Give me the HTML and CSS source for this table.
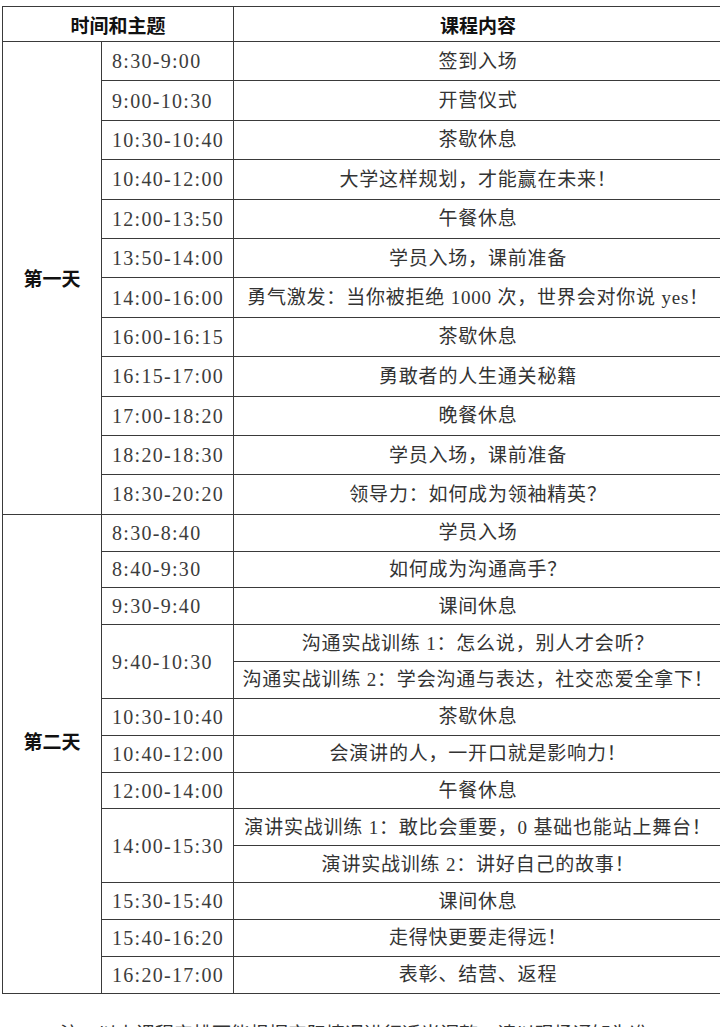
FILE: index.html
```html
<!DOCTYPE html>
<html lang="zh-CN">
<head>
<meta charset="utf-8">
<title>课程安排</title>
<link rel="stylesheet" href="styles.css">
</head>
<body>
<div class="page">
<table class="schedule">
  <colgroup>
    <col class="c-day"><col class="c-time"><col class="c-content">
  </colgroup>
  <thead>
    <tr class="head">
      <th colspan="2">时间和主题</th>
      <th>课程内容</th>
    </tr>
  </thead>
  <tbody class="day1">
    <tr><td class="day" rowspan="12">第一天</td><td class="time">8:30-9:00</td><td class="txt">签到入场</td></tr>
    <tr><td class="time">9:00-10:30</td><td class="txt">开营仪式</td></tr>
    <tr><td class="time">10:30-10:40</td><td class="txt">茶歇休息</td></tr>
    <tr><td class="time">10:40-12:00</td><td class="txt">大学这样规划，才能赢在未来！</td></tr>
    <tr><td class="time">12:00-13:50</td><td class="txt">午餐休息</td></tr>
    <tr><td class="time">13:50-14:00</td><td class="txt">学员入场，课前准备</td></tr>
    <tr><td class="time">14:00-16:00</td><td class="txt">勇气激发：当你被拒绝 1000 次，世界会对你说 yes！</td></tr>
    <tr><td class="time">16:00-16:15</td><td class="txt">茶歇休息</td></tr>
    <tr><td class="time">16:15-17:00</td><td class="txt">勇敢者的人生通关秘籍</td></tr>
    <tr><td class="time">17:00-18:20</td><td class="txt">晚餐休息</td></tr>
    <tr><td class="time">18:20-18:30</td><td class="txt">学员入场，课前准备</td></tr>
    <tr><td class="time">18:30-20:20</td><td class="txt">领导力：如何成为领袖精英？</td></tr>
  </tbody>
  <tbody class="day2">
    <tr><td class="day day-b" rowspan="13">第二天</td><td class="time">8:30-8:40</td><td class="txt">学员入场</td></tr>
    <tr><td class="time">8:40-9:30</td><td class="txt">如何成为沟通高手？</td></tr>
    <tr><td class="time">9:30-9:40</td><td class="txt">课间休息</td></tr>
    <tr><td class="time" rowspan="2">9:40-10:30</td><td class="txt">沟通实战训练 1：怎么说，别人才会听？</td></tr>
    <tr><td class="txt">沟通实战训练 2：学会沟通与表达，社交恋爱全拿下！</td></tr>
    <tr><td class="time">10:30-10:40</td><td class="txt">茶歇休息</td></tr>
    <tr><td class="time">10:40-12:00</td><td class="txt">会演讲的人，一开口就是影响力！</td></tr>
    <tr><td class="time">12:00-14:00</td><td class="txt">午餐休息</td></tr>
    <tr><td class="time" rowspan="2">14:00-15:30</td><td class="txt">演讲实战训练 1：敢比会重要，0 基础也能站上舞台！</td></tr>
    <tr><td class="txt">演讲实战训练 2：讲好自己的故事！</td></tr>
    <tr><td class="time">15:30-15:40</td><td class="txt">课间休息</td></tr>
    <tr><td class="time">15:40-16:20</td><td class="txt">走得快更要走得远！</td></tr>
    <tr><td class="time">16:20-17:00</td><td class="txt">表彰、结营、返程</td></tr>
  </tbody>
</table>
<p class="note">注：以上课程安排可能根据实际情况进行适当调整，请以现场通知为准。</p>
</div>
</body>
</html>
```

FILE: styles.css
```css
html, body {
  margin: 0;
  padding: 0;
  background: #ffffff;
}

body {
  width: 720px;
  height: 1027px;
  overflow: hidden;
  font-family: "Liberation Serif", "Noto Sans CJK SC", serif;
  color: #333;
}

.page {
  padding: 6px 0 0 2px;
}

.schedule {
  border-collapse: collapse;
  table-layout: fixed;
  width: 720px;
}

.c-day { width: 99px; }
.c-time { width: 132px; }
.c-content { width: 489px; }

.schedule th,
.schedule td {
  border: 1px solid #3a3a3a;
  padding: 0;
  vertical-align: middle;
}

.head {
  height: 35px;
}

.schedule th {
  font-family: "Noto Sans CJK SC", sans-serif;
  font-weight: 700;
  font-size: 19px;
  color: #111;
  text-align: center;
  line-height: 1;
}

.day1 tr { height: 39.4px; }
.day2 tr { height: 36.85px; }

.day {
  font-family: "Noto Sans CJK SC", sans-serif;
  font-weight: 700;
  font-size: 19px;
  color: #111;
  text-align: center;
}

.day-b {
  padding-bottom: 26px !important;
}

.time {
  font-family: "Liberation Serif", serif;
  font-size: 20px;
  letter-spacing: 1.3px;
  color: #3c3c3c;
  padding-left: 10px !important;
  line-height: 1;
}

.txt {
  font-size: 19px;
  letter-spacing: 0.8px;
  color: #333;
  text-align: center;
  line-height: 1;
  white-space: nowrap;
}

.note {
  margin: 27px 0 0 58px;
  font-size: 19px;
  line-height: 28px;
  color: #333;
}
```
